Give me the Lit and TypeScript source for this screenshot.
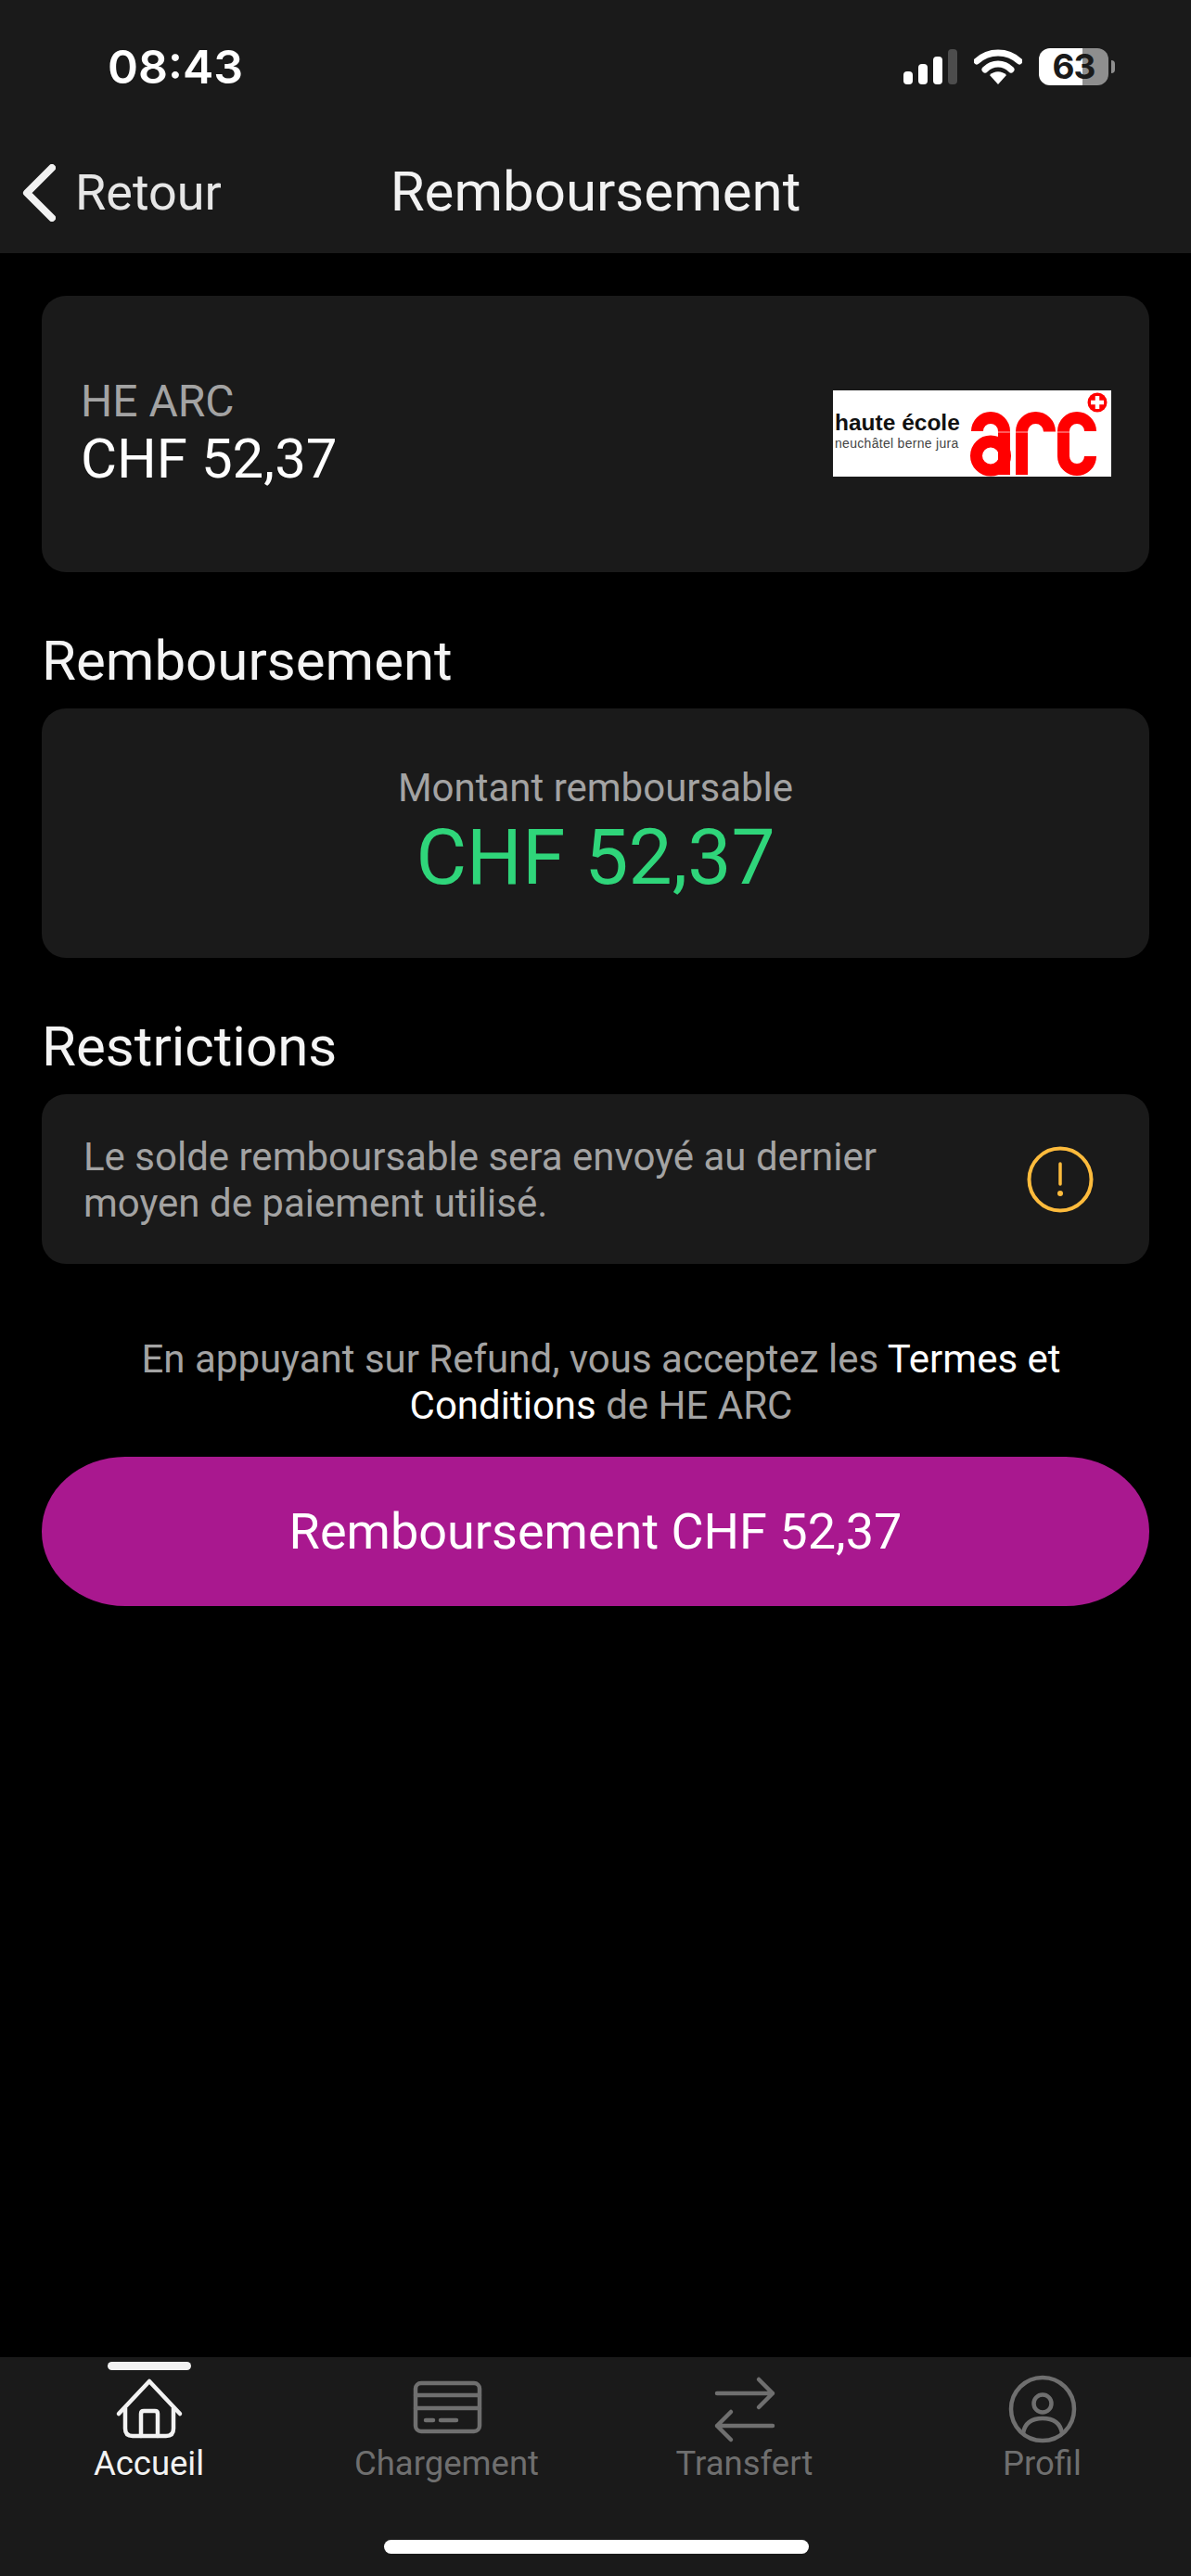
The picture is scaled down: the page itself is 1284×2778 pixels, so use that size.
import { LitElement, html, css, svg } from "lit";
import { customElement } from "lit/decorators.js";

const homeIcon = svg`<path d="M3 39 L36 4 L69 39" /><path d="M10 33 V55 Q10 63 18 63 H54 Q62 63 62 55 V33" /><path d="M27 63 V39 Q27 36 30 36 H42 Q45 36 45 39 V63" />`;
const cardIcon = svg`<rect x="2" y="6" width="69" height="52" rx="6" /><path d="M2 19 H71 M2 33 H71" /><path d="M13 46 H21 M29 46 H46" />`;
const swapIcon = svg`<path d="M2 17 H62 M47 2 L62 17 L47 32" /><path d="M62 52 H2 M17 37 L2 52 L17 67" />`;
const userIcon = svg`<circle cx="36" cy="34" r="34" /><circle cx="36" cy="28" r="9.5" /><path d="M15 60 C17 48 25 44 36 44 C47 44 55 48 57 60" />`;

@customElement("app-root")
export class AppRoot extends LitElement {
  static styles = css`
    :host {
      display: block;
      width: 1284px;
      height: 2778px;
      background: #000;
      font-family: Roboto, "Noto Sans", sans-serif;
      color: #fff;
    }
    .page { display: flex; flex-direction: column; height: 2778px; }

    .head { background: #1a1a1a; height: 273px; flex: none; display: flex; flex-direction: column; }
    .status { display: flex; align-items: center; justify-content: space-between; height: 144px; padding: 0 82px 0 116px; box-sizing: border-box; }
    .time { font-family: Inter, sans-serif; font-weight: 600; font-size: 50px; line-height: 50px; letter-spacing: 0; }
    .status-icons { display: flex; align-items: center; gap: 18px; }
    .signal { display: block; width: 58px; height: 38px; }
    .wifi { display: block; width: 52px; height: 38px; }
    .battery { display: flex; align-items: center; gap: 3px; }
    .cell { width: 75px; height: 40px; border-radius: 12px; background: linear-gradient(90deg, #fff 0 47px, #8e8e8e 47px); color: #1a1a1a; font-family: Inter, sans-serif; font-weight: 700; font-size: 37px; line-height: 40px; letter-spacing: -1px; text-align: center; }
    .cap { width: 4px; height: 14px; border-radius: 0 4px 4px 0; background: #8e8e8e; }

    .nav { position: relative; height: 129px; display: flex; align-items: center; justify-content: center; }
    .back { position: absolute; left: 24px; top: 32px; display: flex; align-items: center; gap: 21px; font-size: 54px; color: #e6e6e6; }
    .back svg { display: block; width: 36px; height: 62px; }
    .title { font-size: 60px; color: #f2f2f2; margin-top: -4px; }

    .content { flex: 1; padding: 46px 45px 0; display: flex; flex-direction: column; }
    .card { background: #1a1a1a; border-radius: 26px; }
    .merchant { height: 298px; box-sizing: border-box; display: flex; align-items: center; justify-content: space-between; padding: 0 41px 0 43px; }
    .merchant-id { margin-left: -1px; }
    .merchant-name { font-size: 48px; line-height: 54px; margin-top: -1px; color: #a3a3a3; }
    .merchant-amount { font-size: 60px; line-height: 70px; color: #fff; }

    .logo { width: 300px; height: 93px; margin-top: -2px; background: #fff; position: relative; color: #111; flex: none; }
    .logo-top { position: absolute; left: 2px; top: 20px; font-family: "Liberation Sans", sans-serif; font-weight: 700; font-size: 24.5px; line-height: 30px; white-space: nowrap; }
    .logo-sub { position: absolute; left: 2px; top: 47px; font-family: "Liberation Sans", sans-serif; font-size: 14px; line-height: 20px; letter-spacing: 0.3px; color: #444; white-space: nowrap; }
    .logo svg { position: absolute; left: 0; top: 0; width: 300px; height: 93px; }

    h2 { margin: 0; font-weight: 400; font-size: 60px; line-height: 70px; color: #f4f4f4; }
    .sec-refund { margin-top: 61px; }
    .sec-limit { margin-top: 61px; }
    .refund { margin-top: 16px; height: 269px; display: flex; flex-direction: column; align-items: center; justify-content: center; box-sizing: border-box; }
    .refund-label { font-size: 42px; line-height: 50px; color: #a3a3a3; }
    .refund-value { font-size: 84px; line-height: 96px; margin-top: 2px; color: #2fd57a; }

    .notice { margin-top: 16px; height: 183px; box-sizing: border-box; display: flex; align-items: flex-start; justify-content: space-between; padding: 43px 60px 0 45px; }
    .notice p { margin: 0; font-size: 42px; line-height: 50px; color: #a3a3a3; }
    .notice svg { display: block; width: 72px; height: 72px; margin-top: 13px; flex: none; }

    .terms { margin: 78px 0 0; text-align: center; font-size: 42px; line-height: 50px; color: #a3a3a3; padding: 0 74px 0 86px; }
    .terms b { font-weight: 400; color: #fff; }
    .cta { margin-top: 30px; height: 161px; border-radius: 90px / 80px; background: #a9188f; display: flex; align-items: center; justify-content: center; font-size: 54px; color: #fff; }

    .tabs { flex: none; height: 236px; background: #1a1a1a; position: relative; display: grid; grid-template-columns: repeat(4, 321px); }
    .tab { display: flex; flex-direction: column; align-items: center; color: #6f6f6f; font-size: 36.5px; line-height: 44px; }
    .tab.on { color: #f2f2f2; }
    .bar { width: 90px; height: 9px; border-radius: 5px; background: #f2f2f2; margin-top: 5px; }
    .bar.off { background: transparent; }
    .ico { height: 76px; margin-top: 6px; display: flex; align-items: center; justify-content: center; }
    .ico svg { display: block; width: 72px; height: 72px; fill: none; stroke: currentColor; stroke-width: 4.5; stroke-linecap: round; stroke-linejoin: round; overflow: visible; }
    .tab.swap svg { margin-left: 9px; }
    .tab span { margin-top: -3px; }
    .home-bar { position: absolute; left: 414px; top: 197px; width: 458px; height: 15px; border-radius: 8px; background: #fff; }
  `;

  private tab(label: string, icon: unknown, extra = "") {
    const on = extra === "on";
    return html`<div class="tab ${extra}">
      <div class="bar ${on ? "" : "off"}"></div>
      <div class="ico"><svg viewBox="0 0 72 72">${icon}</svg></div>
      <span>${label}</span>
    </div>`;
  }

  render() {
    return html`<div class="page">
      <header class="head">
        <div class="status">
          <div class="time">08:43</div>
          <div class="status-icons">
            <svg class="signal" viewBox="0 0 58 38">
              <rect x="0" y="24" width="10" height="14" rx="4" fill="#fff" />
              <rect x="16" y="16" width="10" height="22" rx="4" fill="#fff" />
              <rect x="32" y="8" width="10" height="30" rx="4" fill="#fff" />
              <rect x="48" y="0" width="10" height="38" rx="4" fill="#4d4d4d" />
            </svg>
            <svg class="wifi" viewBox="0 0 52 38">
              <path d="M3 13 C16 1 36 1 49 13" fill="none" stroke="#fff" stroke-width="7" stroke-linecap="round" />
              <path d="M12 22 C20 14 32 14 40 22" fill="none" stroke="#fff" stroke-width="7" stroke-linecap="round" />
              <path d="M17 28 C22 23 30 23 35 28 L26 38 Z" fill="#fff" />
            </svg>
            <div class="battery"><div class="cell">63</div><div class="cap"></div></div>
          </div>
        </div>
        <div class="nav">
          <div class="back">
            <svg viewBox="0 0 36 62"><path d="M32 4 L5 31 L32 58" fill="none" stroke="#f2f2f2" stroke-width="8" stroke-linecap="round" stroke-linejoin="round" /></svg>
            <span>Retour</span>
          </div>
          <div class="title">Remboursement</div>
        </div>
      </header>

      <main class="content">
        <section class="card merchant">
          <div class="merchant-id">
            <div class="merchant-name">HE ARC</div>
            <div class="merchant-amount">CHF 52,37</div>
          </div>
          <div class="logo">
            <div class="logo-top">haute école</div>
            <div class="logo-sub">neuchâtel berne jura</div>
            <svg viewBox="0 0 300 93">
              <g fill="none" stroke="#f00" stroke-width="13">
                <path d="M155.5 44 A14.5 14.5 0 0 1 184.5 44 V91" />
                <circle cx="170" cy="70.5" r="15.5" />
                <path d="M203.5 91 V44.5 A15 15 0 0 1 233.5 44.5" />
                <path d="M277.5 44 A14.5 14.5 0 0 0 248.5 44 V71 A14.5 14.5 0 0 0 277.5 71" />
              </g>
              <path d="M178 45 H191 M197 45 H210 M242 45 H255" stroke="#fff" stroke-width="1" opacity="0.7" />
              <circle cx="285" cy="13" r="10.5" fill="#f00" />
              <path d="M278 13 H292 M285 6 V20" stroke="#fff" stroke-width="4.5" />
            </svg>
          </div>
        </section>

        <h2 class="sec-refund">Remboursement</h2>
        <section class="card refund">
          <div class="refund-label">Montant remboursable</div>
          <div class="refund-value">CHF 52,37</div>
        </section>

        <h2 class="sec-limit">Restrictions</h2>
        <section class="card notice">
          <p>Le solde remboursable sera envoyé au dernier<br />moyen de paiement utilisé.</p>
          <svg viewBox="0 0 72 72">
            <circle cx="36" cy="36" r="33.5" fill="none" stroke="#fdbb3c" stroke-width="4" />
            <path d="M36 19 V41" stroke="#fdbb3c" stroke-width="3.5" stroke-linecap="round" />
            <circle cx="36" cy="51" r="3" fill="#fdbb3c" />
          </svg>
        </section>

        <p class="terms">En appuyant sur Refund, vous acceptez les <b>Termes et Conditions</b> de HE ARC</p>
        <div class="cta">Remboursement CHF 52,37</div>
      </main>

      <nav class="tabs">
        ${this.tab("Accueil", homeIcon, "on")}
        ${this.tab("Chargement", cardIcon)}
        ${this.tab("Transfert", swapIcon, "swap")}
        ${this.tab("Profil", userIcon)}
        <div class="home-bar"></div>
      </nav>
    </div>`;
  }
}
